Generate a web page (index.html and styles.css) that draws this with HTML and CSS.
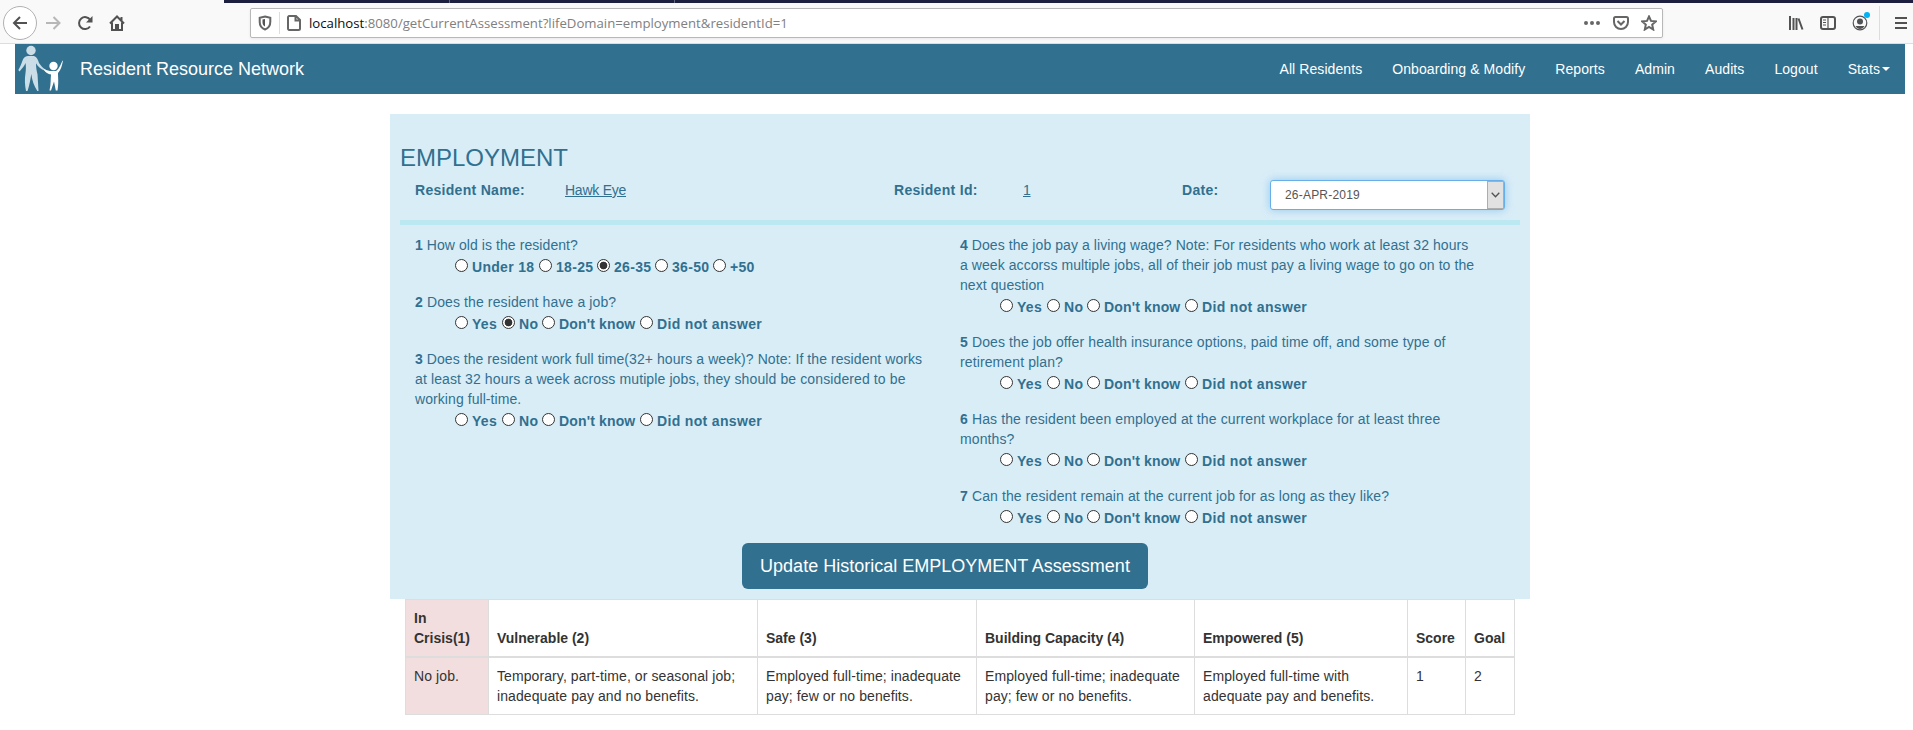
FILE: index.html
```html
<!DOCTYPE html>
<html lang="en">
<head>
<meta charset="utf-8">
<title>Resident Resource Network</title>
<link rel="stylesheet" href="styles.css">
</head>
<body>
<header class="browser">
  <div class="tabstrip"><i></i><i></i></div>
  <div class="toolbar">
    <div class="nav-tools">
      <span class="back"><svg width="16" height="16" viewBox="0 0 16 16"><path d="M15 8H2M8 2L2 8l6 6"/></svg></span>
      <svg class="dim" width="16" height="16" viewBox="0 0 16 16"><path d="M1 8h13M8.500 2l6 6-6 6"/></svg>
      <svg width="16" height="16" viewBox="0 0 16 16"><path d="M13 11.500A6 6 0 1 1 13.200 5"/><path class="fill" d="M15.500 1v6.500H9z"/></svg>
      <svg width="16" height="16" viewBox="0 0 16 16"><path d="M1 8.500L8 1.500l7 7M3 7.500V15h10V7.500M12.500 2v4"/><path class="fill" d="M6 9h4v6H6z"/></svg>
    </div>
    <div class="urlbar">
      <svg width="14" height="16" viewBox="0 0 14 16"><path d="M7 1.500l5.300 1.300v4C12.300 11 10 13.500 7 14.500 4 13.500 1.700 11 1.700 6.800v-4z"/><path class="fill" d="M7 4v7.500C5.200 10.500 4.500 9 4.500 7V4.500z"/></svg>
      <i class="sep"></i>
      <svg width="14" height="16" viewBox="0 0 14 16"><path d="M3 1h6l4 4v8.500a1.500 1.500 0 0 1-1.500 1.500h-8.500A1.500 1.500 0 0 1 1 13.500v-11A1.500 1.500 0 0 1 3 1zM8.500 1v4.500H13"/></svg>
      <span class="url"><b>localhost</b>:8080/getCurrentAssessment?lifeDomain=employment&amp;residentId=1</span>
      <span class="page-actions">
        <svg width="18" height="16" viewBox="0 0 18 16"><path class="dot" d="M1 8a2 2 0 1 0 4 0 2 2 0 1 0-4 0M7 8a2 2 0 1 0 4 0 2 2 0 1 0-4 0M13 8a2 2 0 1 0 4 0 2 2 0 1 0-4 0"/></svg>
        <svg width="16" height="16" viewBox="0 0 16 16"><path d="M2.500 2h11a1.500 1.500 0 0 1 1.500 1.500V7A7 7 0 0 1 1 7V3.500A1.500 1.500 0 0 1 2.500 2zM4.500 6L8 9.500 11.500 6"/></svg>
        <svg width="16" height="16" viewBox="0 0 16 16"><path d="M8 1.500l2 4.400 4.800.5-3.600 3.200 1 4.900L8 12l-4.200 2.500 1-4.900L1.200 6.400 6 5.900z"/></svg>
      </span>
    </div>
    <div class="browser-tools">
      <svg width="16" height="16" viewBox="0 0 16 16"><path d="M2 1v14M5.500 3v12M8.500 3v12M10.500 3.500l4 11"/></svg>
      <svg width="16" height="16" viewBox="0 0 16 16"><rect x="1" y="2" width="14" height="12" rx="2"/><path class="thin" d="M8 2v12"/><path class="thin" d="M3 5h3M3 7.500h3M3 10h3"/></svg>
      <span class="account"><svg width="16" height="16" viewBox="0 0 16 16"><circle class="thin" cx="8" cy="8" r="6.800"/><circle class="fill" cx="8" cy="6.500" r="3"/><path class="fill" d="M3.500 11h9c-1 2-2.800 3-4.500 3s-3.500-1-4.500-3z"/></svg><i></i></span>
      <i class="tool-sep"></i>
      <svg width="14" height="16" viewBox="0 0 14 16"><path d="M1 3h12M1 8h12M1 13h12"/></svg>
    </div>
  </div>
</header>
<nav class="navbar">
  <svg class="logo" width="46" height="48" viewBox="0 0 46 48"><g fill="#cbdde7"><circle cx="13" cy="5.500" r="4.700"/><path d="M10 11h6c3 1 4 4 5 7 2 3 4 5 7 7l-1 .8c-4-1.500-7-4-9-7.500 0 4 .5 7 1.500 11L20.500 46h-1.200C16 41 14 35 13.300 29c-1 6-1.800 11-3.800 17H8C6.800 40 6.500 34 7.500 28c.5-4 .5-7 0-10-1 3-3 5-6 8.500L.3 25C3 21 4 16 5.500 13.500 6.500 12 8 11.200 10 11z"/></g><g fill="#fff"><circle cx="35.500" cy="21" r="4.200"/><path d="M26 24c3 1.500 5 2 8 2h4c3-2 4-5 6.500-10.500l.4.500c-1 5-2 9-4.900 12 0 5 .8 10-.5 17.500h-1.700l-1.800-9-3 9h-1.500c1.500-6 1-12 1.500-16-3-.5-5.500-2-7-4.500z"/></g></svg>
  <a class="brand">Resident Resource Network</a>
  <ul class="menu"><li>All Residents</li><li>Onboarding &amp; Modify</li><li>Reports</li><li>Admin</li><li>Audits</li><li>Logout</li><li>Stats<i class="caret"></i></li></ul>
</nav>
<main class="container">
  <form class="panel">
    <h3>EMPLOYMENT</h3>
    <div class="resident">
      <b>Resident Name:</b><a>Hawk Eye</a><b>Resident Id:</b><a>1</a><b>Date:</b>
      <div class="select"><span>26-APR-2019</span><i><svg width="9" height="6" viewBox="0 0 9 6"><path d="M.7.800l3.800 4 3.800-4"/></svg></i></div>
    </div>
    <div class="rule"></div>
    <div class="questions">
      <div class="col">
        <section><p class="snug"><b>1</b> How old is the resident?</p><div class="options ages"><label><input type="radio" name="q1">Under 18</label><label><input type="radio" name="q1">18-25</label><label><input type="radio" name="q1" checked>26-35</label><label><input type="radio" name="q1">36-50</label><label><input type="radio" name="q1">+50</label></div></section>
        <section><p><b>2</b> Does the resident have a job?</p><div class="options"><label><input type="radio" name="q2">Yes</label><label><input type="radio" name="q2" checked>No</label><label><input type="radio" name="q2">Don't know</label><label><input type="radio" name="q2">Did not answer</label></div></section>
        <section><p><span class="snug">
          <b>3</b> Does the resident work full time(32+ hours a week)? Note: If the resident works</span><br>at least 32 hours a week across mutiple jobs, they should be considered to be<br><span class="snug">working full-time.</span></p><div class="options"><label><input type="radio" name="q3">Yes</label><label><input type="radio" name="q3">No</label><label><input type="radio" name="q3">Don't know</label><label><input type="radio" name="q3">Did not answer</label></div></section>
      </div>
      <div class="col">
        <section><p class="snug"><b>4</b> Does the job pay a living wage? Note: For residents who work at least 32 hours<br>a week accorss multiple jobs, all of their job must pay a living wage to go on to the<br>next question</p><div class="options"><label><input type="radio" name="q4">Yes</label><label><input type="radio" name="q4">No</label><label><input type="radio" name="q4">Don't know</label><label><input type="radio" name="q4">Did not answer</label></div></section>
        <section><p><b>5</b> Does the job offer health insurance options, paid time off, and some type of<br>retirement plan?</p><div class="options"><label><input type="radio" name="q5">Yes</label><label><input type="radio" name="q5">No</label><label><input type="radio" name="q5">Don't know</label><label><input type="radio" name="q5">Did not answer</label></div></section>
        <section><p><b>6</b> Has the resident been employed at the current workplace for at least three<br>months?</p><div class="options"><label><input type="radio" name="q6">Yes</label><label><input type="radio" name="q6">No</label><label><input type="radio" name="q6">Don't know</label><label><input type="radio" name="q6">Did not answer</label></div></section>
        <section><p><b>7</b> Can the resident remain at the current job for as long as they like?</p><div class="options"><label><input type="radio" name="q7">Yes</label><label><input type="radio" name="q7">No</label><label><input type="radio" name="q7">Don't know</label><label><input type="radio" name="q7">Did not answer</label></div></section>
      </div>
    </div>
    <button class="submit" type="button">Update Historical EMPLOYMENT Assessment</button>
  </form>
  <table class="scores">
    <colgroup><col class="c1"><col class="c2"><col class="c3"><col class="c4"><col class="c5"><col class="c6"><col class="c7"></colgroup>
    <thead><tr><th class="danger">In Crisis(1)</th><th>Vulnerable (2)</th><th>Safe (3)</th><th>Building Capacity (4)</th><th>Empowered (5)</th><th>Score</th><th>Goal</th></tr></thead>
    <tbody><tr><td class="danger">No job.</td><td>Temporary, part-time, or seasonal job;<br>inadequate pay and no benefits.</td><td>Employed full-time; inadequate<br>pay; few or no benefits.</td><td>Employed full-time; inadequate<br>pay; few or no benefits.</td><td>Employed full-time with<br>adequate pay and benefits.</td><td>1</td><td>2</td></tr></tbody>
  </table>
</main>
</body>
</html>
```
FILE: styles.css
```css
* { box-sizing: border-box; }
body { margin: 0; background: #fff; color: #333; font: 14px/20px "Liberation Sans", Arial, sans-serif; overflow: hidden; }
svg { flex: none; display: block; fill: none; stroke: #525253; stroke-width: 2; }
svg .fill { fill: #525253; stroke: none; }
svg .dot { fill: #666; stroke: none; }
svg .thin { stroke-width: 1.2; }

.browser { height: 44px; background: #f9f9fa; border-bottom: 1px solid #ddd; }
.tabstrip { height: 3px; margin-left: 224px; background: #1d1f40; display: flex; padding-left: 225px; gap: 224px; }
.tabstrip i { width: 1px; background: #62647c; }
.toolbar { height: 40px; display: flex; align-items: center; }
.nav-tools { width: 250px; flex: none; display: flex; align-items: center; padding-left: 3px; gap: 16px; }
.back { width: 34px; height: 34px; border: 1px solid #b1b1b3; border-radius: 50%; background: #fff; display: flex; align-items: center; justify-content: center; margin-right: -8px; }
.dim { stroke: #b7b7b8; }
.urlbar { width: 1413px; flex: none; height: 30px; border: 1px solid #b8b8b9; border-radius: 2px; background: #fff; box-shadow: 0 1px 3px #0001; display: flex; align-items: center; padding: 0 5px 0 7px; }
.sep { width: 1px; height: 22px; background: #ddd; margin: 0 7px; }
.url { margin-left: 8px; flex: 1; font: 13.2px/20px "Open Sans", sans-serif; color: #808080; white-space: nowrap; }
.url b { font-weight: 400; color: #0c0c0d; }
.page-actions { display: flex; gap: 12px; }
.page-actions svg, .urlbar svg { stroke: #666; }
.browser-tools { display: flex; flex: none; align-items: center; margin-left: 125px; height: 100%; }
.browser-tools svg { margin-right: 16px; }
.browser-tools svg:last-child { margin-right: 0; }
.account { position: relative; }
.account i { position: absolute; left: 12px; top: -3px; width: 6px; height: 6px; border-radius: 50%; background: #00b3f4; }
.tool-sep { width: 1px; height: 34px; background: #ddd; margin-right: 14px; margin-left: -5px; }
.account svg { margin-right: 16px !important; }

.navbar { height: 50px; margin: 0 8px 0 15px; background: #31708f; color: #fff; display: flex; align-items: center; }
.logo { margin-left: 3px; stroke: none; }
.brand { margin-left: 16px; font-size: 18px; }
.menu { display: flex; margin: 0 0 0 auto; padding: 0; list-style: none; letter-spacing: .08px; }
.menu li { padding: 0 15px; display: flex; align-items: center; }
.caret { margin-left: 2px; border: 4px solid transparent; border-top-color: #fff; border-bottom: 0; }

.container { width: 1140px; margin: 20px 0 0 390px; }
.panel { height: 485px; background: #d9edf7; color: #31708f; padding: 31px 10px 0; }
h3 { margin: 0; font-size: 24px; line-height: 26px; font-weight: 400; }
.resident { margin: 9px 15px 0; height: 30px; display: grid; grid-template-columns: 150px 329px 129px 159px 88px 235px; }
.resident a { text-decoration: underline; letter-spacing: -.25px; }
.resident b, .options { letter-spacing: .3px; }
.select { height: 30px; border: 1px solid #66afe9; border-radius: 3px; background: #fff; box-shadow: 0 0 8px rgba(102,175,233,.6); color: #555; font-size: 12px; letter-spacing: .2px; line-height: 28px; padding-left: 14px; display: flex; justify-content: space-between; }
.select i { width: 17px; border: 1px solid #adadad; background: #e1e1e1; display: flex; align-items: center; justify-content: center; }
.select svg { stroke-width: 1.3; }
.rule { height: 5px; background: #bce8f1; margin-top: 10px; }
.questions { display: grid; grid-template-columns: 545px 545px; height: 318px; padding: 10px 15px 0; }
section { margin-bottom: 15px; }
p { margin: 0; white-space: nowrap; letter-spacing: .115px; }
.snug { letter-spacing: .07px; }
.options { height: 22px; padding: 2px 0 0 40px; display: flex; font-weight: 700; }
.options label { display: flex; white-space: nowrap; width: 47px; flex: none; }
.options label:nth-child(2) { width: 40px; }
.options label:nth-child(3) { width: 98px; letter-spacing: .15px; }
.options label:nth-child(4) { letter-spacing: .34px; }
.ages label:nth-child(n) { width: 58px; letter-spacing: .3px; }
.ages label:first-child { width: 84px; }
.options input { appearance: none; width: 13px; height: 13px; margin: 2px 4px 0 0; border: 1px solid #333; border-radius: 50%; background: #fff; flex: none; }
.options input:checked { background: radial-gradient(circle, #333 0 3.5px, #fff 4.2px); }
.submit { display: block; margin-left: 342px; width: 406px; height: 46px; border: 0; border-radius: 6px; background: #31708f; color: #fff; font: 18px/24px "Liberation Sans", Arial, sans-serif; padding: 0; white-space: nowrap; }

.scores { width: 1110px; margin: 0 15px; border-collapse: collapse; table-layout: fixed; }
.scores th, .scores td { border: 1px solid #ddd; padding: 8px; text-align: left; vertical-align: top; }
.scores td { letter-spacing: .09px; }
.scores th { vertical-align: bottom; border-bottom-width: 2px; }
.scores .danger { background: #f2dede; }
.c1 { width: 83px; } .c2 { width: 269px; } .c3 { width: 219px; } .c4 { width: 218px; } .c5 { width: 213px; } .c6 { width: 58px; } .c7 { width: 49px; }
```
